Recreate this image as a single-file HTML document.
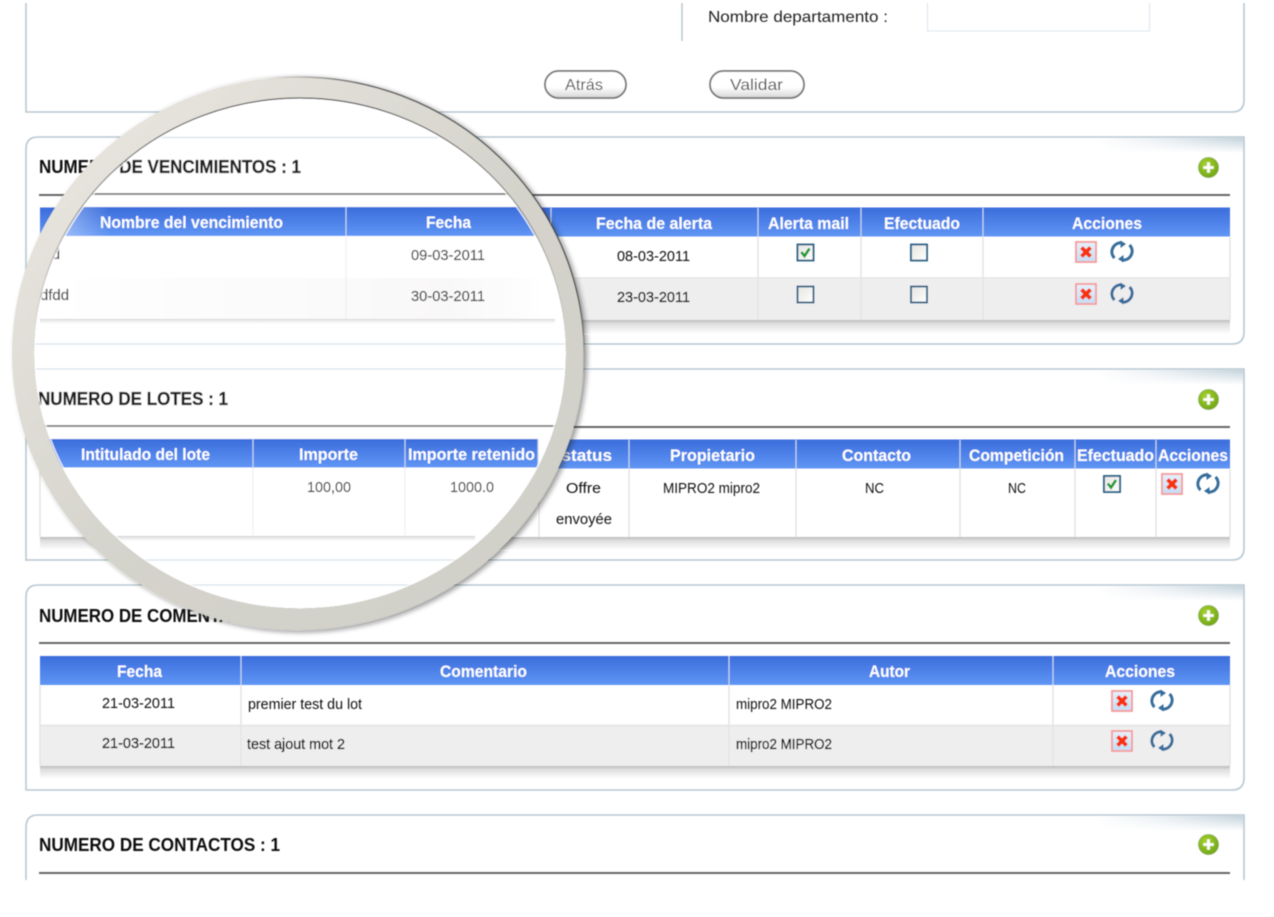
<!DOCTYPE html>
<html lang="es"><head><meta charset="utf-8"><title>Vencimientos</title>
<style>
html,body{margin:0;padding:0;background:#fff;width:1274px;height:917px;overflow:hidden}
svg{display:block;position:absolute;left:0;top:0}
text{font-family:"Liberation Sans",sans-serif}
.ti{font-size:18px;font-weight:bold;fill:#111}
.tl{font-size:18px;font-weight:bold;fill:#222;stroke:#222;stroke-width:.35}
.h{font-size:16.5px;font-weight:bold;fill:#fff}
.c{font-size:15px;fill:#111}
.d{font-size:15px;fill:#000;stroke:#000;stroke-width:.3}
.g{font-size:15px;fill:#444;stroke:#444;stroke-width:.15}
.n{font-size:16px;fill:#222}
.b{font-size:16px;fill:#555}
.p{fill:none;stroke:#b7c8d2;stroke-width:1.6}
.r{stroke:#666;stroke-width:2}
.s{stroke:#e3e3e3;stroke-width:1.4}
.hs{stroke:#c9d6ec;stroke-width:1.2}
</style></head><body>
<svg width="1274" height="917" viewBox="0 0 1274 917" xmlns="http://www.w3.org/2000/svg">
<defs>
<linearGradient id="hd" x1="0" y1="0" x2="0" y2="1"><stop offset="0" stop-color="#3b6ddb"/><stop offset="1" stop-color="#6096f5"/></linearGradient>
<linearGradient id="sh" x1="0" y1="0" x2="0" y2="1"><stop offset="0" stop-color="#bbb"/><stop offset=".25" stop-color="#ddd"/><stop offset="1" stop-color="#fff"/></linearGradient>
<linearGradient id="wedge" x1="0" y1="0" x2="1" y2="0"><stop offset="0" stop-color="#fff"/><stop offset=".45" stop-color="#e9eff3"/><stop offset="1" stop-color="#c3d2dc"/></linearGradient>
<linearGradient id="wfade" x1="0" y1="0" x2="0" y2="1"><stop offset="0" stop-color="#fff" stop-opacity="0"/><stop offset="1" stop-color="#fff"/></linearGradient>
<linearGradient id="btn" x1="0" y1="0" x2="0" y2="1"><stop offset="0" stop-color="#fff"/><stop offset=".6" stop-color="#fff"/><stop offset="1" stop-color="#d5d5d5"/></linearGradient>
<linearGradient id="cb" x1="0" y1="0" x2="1" y2="1"><stop offset="0" stop-color="#e4e4e0"/><stop offset="1" stop-color="#fff"/></linearGradient>
<linearGradient id="del" x1="0" y1="0" x2="0" y2="1"><stop offset="0" stop-color="#e8f1fb"/><stop offset="1" stop-color="#c5dcf4"/></linearGradient>
<linearGradient id="lrow" x1="0" y1="0" x2="1" y2="0"><stop offset="0" stop-color="#fff"/><stop offset=".8" stop-color="#f9f8f8"/><stop offset="1" stop-color="#fff"/></linearGradient>
<linearGradient id="glare" x1="0" y1="0" x2="1" y2="0"><stop offset="0" stop-color="#fff" stop-opacity=".4"/><stop offset="1" stop-color="#fff" stop-opacity="0"/></linearGradient>
<linearGradient id="ringg" x1="0" y1="0" x2="1" y2="1"><stop offset="0" stop-color="#ece9e3"/><stop offset=".55" stop-color="#d4d3cb"/><stop offset="1" stop-color="#d1d0c8"/></linearGradient>
<linearGradient id="inl" x1="0" y1="0" x2="0" y2="1"><stop offset="0" stop-color="#555"/><stop offset=".3" stop-color="#777" stop-opacity=".4"/><stop offset=".45" stop-color="#777" stop-opacity="0"/></linearGradient>
<linearGradient id="outl" x1="0" y1="1" x2="1" y2="0"><stop offset=".72" stop-color="#333" stop-opacity="0"/><stop offset=".8" stop-color="#333" stop-opacity=".85"/></linearGradient>
<radialGradient id="gr" cx=".4" cy=".35" r=".7"><stop offset="0" stop-color="#a8d42c"/><stop offset="1" stop-color="#6ea412"/></radialGradient>
<filter id="bl" x="-2%" y="-2%" width="104%" height="104%"><feGaussianBlur stdDeviation=".45"/></filter>
<filter id="bs" x="-10%" y="-10%" width="120%" height="120%"><feGaussianBlur stdDeviation="3"/></filter>
<clipPath id="lens"><ellipse cx="300" cy="353.5" rx="266" ry="255"/></clipPath>
<clipPath id="pg"><rect width="1274" height="880"/></clipPath>
<symbol id="plus" viewBox="0 0 22 22"><circle cx="11" cy="11" r="10.5" fill="url(#gr)" stroke="#8aa860" stroke-width=".7"/><path d="M11 5.500v11M5.500 11h11" stroke="#fff" stroke-width="3"/></symbol>
<symbol id="del2" viewBox="0 0 22 22"><rect x="1" y="1" width="20" height="20" fill="url(#del)" stroke="#f79a9a" stroke-width="1.800"/><path d="M6.500 6.500l9 9M15.500 6.500l-9 9" stroke="#f8300a" stroke-width="4"/></symbol>
<symbol id="sync" viewBox="0 0 24 22"><path d="M4.500 17.500A9.500 9 0 0 1 11 2.300" fill="none" stroke="#386d9b" stroke-width="3"/><path d="M10.500 0l5.500 3.500-5.500 4z" fill="#386d9b"/><path d="M19.500 4.500A9.500 9 0 0 1 13 19.700" fill="none" stroke="#386d9b" stroke-width="3"/><path d="M13.500 22l-5.500-3.500 5.500-4z" fill="#386d9b"/></symbol>
<symbol id="cbox" viewBox="0 0 18 18"><rect x="1" y="1" width="16" height="16" fill="url(#cb)" stroke="#2f6488" stroke-width="1.900"/></symbol>
<symbol id="cchk" viewBox="0 0 18 18"><rect x="1" y="1" width="16" height="16" fill="url(#cb)" stroke="#2f6488" stroke-width="1.900"/><path d="M4.800 8.500l3.200 4 5-7.500" fill="none" stroke="#129a2c" stroke-width="2.600"/></symbol>
<g id="wd"><rect x="1095" y="0" width="148" height="15" fill="url(#wedge)"/><rect x="1095" y="0" width="148" height="15" fill="url(#wfade)"/></g>
</defs>

<g filter="url(#bl)">
<g clip-path="url(#pg)">
<!-- panel 1 -->
<path class="p" d="M26 3V112H1232Q1244 112 1244 100V3"/>
<line x1="682" y1="3" x2="682" y2="41" stroke="#b9c6ce" stroke-width="1.500"/>
<text class="n" x="708" y="22" textLength="180" lengthAdjust="spacingAndGlyphs">Nombre departamento :</text>
<path d="M927.500 3V31H1149.500V3" fill="none" stroke="#e3e9f0" stroke-width="1.300"/>
<rect x="545" y="71" width="81" height="27" rx="13.500" fill="url(#btn)" stroke="#777" stroke-width="1.800"/>
<text class="b" x="565" y="90" textLength="38" lengthAdjust="spacingAndGlyphs">Atrás</text>
<rect x="710" y="71" width="94" height="27" rx="13.500" fill="url(#btn)" stroke="#777" stroke-width="1.800"/>
<text class="b" x="730" y="90" textLength="53" lengthAdjust="spacingAndGlyphs">Validar</text>

<!-- panel 2 -->
<use href="#wd" y="138"/>
<path class="p" d="M26 344V149Q26 137 38 137H1244V332Q1244 344 1232 344Z"/>
<text class="ti" x="39" y="173" textLength="262" lengthAdjust="spacingAndGlyphs">NUMERO DE VENCIMIENTOS : 1</text>
<use href="#plus" x="1198" y="157" width="21" height="21"/>
<line class="r" x1="39" y1="195" x2="1230" y2="195"/>
<rect x="40" y="207.500" width="1190" height="29" fill="url(#hd)"/>
<path class="hs" d="M346 208v29M551 208v29M758 208v29M861 208v29M983 208v29"/>
<rect x="40" y="279" width="1190" height="41" fill="#efeeef"/>
<rect x="40" y="320" width="1190" height="14" fill="url(#sh)"/>
<path class="s" d="M40 237v83M346 237v83M551 237v83M758 237v83M861 237v83M983 237v83M1230 237v83"/>
<line class="s" x1="40" y1="278" x2="1230" y2="278"/>
<text class="h" x="596" y="229" textLength="116" lengthAdjust="spacingAndGlyphs">Fecha de alerta</text>
<text class="h" x="768" y="229" textLength="81" lengthAdjust="spacingAndGlyphs">Alerta mail</text>
<text class="h" x="884" y="229" textLength="76" lengthAdjust="spacingAndGlyphs">Efectuado</text>
<text class="h" x="1072" y="229" textLength="70" lengthAdjust="spacingAndGlyphs">Acciones</text>
<text class="c" x="617" y="261" textLength="73" lengthAdjust="spacingAndGlyphs">08-03-2011</text>
<text class="d" x="617" y="302" textLength="73" lengthAdjust="spacingAndGlyphs">23-03-2011</text>
<use href="#cchk" x="796.500" y="243.500" width="18" height="18"/>
<use href="#cbox" x="910" y="243.500" width="18" height="18"/>
<use href="#cbox" x="796.500" y="285.500" width="18" height="18"/>
<use href="#cbox" x="910" y="285.500" width="18" height="18"/>
<use href="#del2" x="1075" y="241" width="22" height="22"/><use href="#sync" x="1110" y="240.500" width="24" height="22"/>
<use href="#del2" x="1075" y="283" width="22" height="22"/><use href="#sync" x="1110" y="282.500" width="24" height="22"/>

<!-- panel 3 -->
<use href="#wd" y="370"/>
<path class="p" d="M26 561V369H1244V548Q1244 560 1232 560H26"/>
<text class="ti" x="39" y="405" textLength="189" lengthAdjust="spacingAndGlyphs">NUMERO DE LOTES : 1</text>
<use href="#plus" x="1198" y="389" width="21" height="21"/>
<line class="r" x1="39" y1="427" x2="1230" y2="427"/>
<rect x="40" y="439.500" width="1190" height="29" fill="url(#hd)"/>
<path class="hs" d="M539 440v29M629 440v29M796 440v29M960 440v29M1075 440v29M1156 440v29"/>
<rect x="40" y="537" width="1190" height="13" fill="url(#sh)"/>
<path class="s" d="M40 469v68M539 469v68M629 469v68M796 469v68M960 469v68M1075 469v68M1156 469v68M1230 469v68"/>
<text class="h" x="550" y="461" textLength="62" lengthAdjust="spacingAndGlyphs">Estatus</text>
<text class="h" x="670" y="461" textLength="85" lengthAdjust="spacingAndGlyphs">Propietario</text>
<text class="h" x="842" y="461" textLength="69" lengthAdjust="spacingAndGlyphs">Contacto</text>
<text class="h" x="969" y="461" textLength="95" lengthAdjust="spacingAndGlyphs">Competición</text>
<text class="h" x="1077" y="461" textLength="77" lengthAdjust="spacingAndGlyphs">Efectuado</text>
<text class="h" x="1158" y="461" textLength="70" lengthAdjust="spacingAndGlyphs">Acciones</text>
<text class="c" x="566" y="493" textLength="35" lengthAdjust="spacingAndGlyphs">Offre</text>
<text class="c" x="556" y="524" textLength="56" lengthAdjust="spacingAndGlyphs">envoyée</text>
<text class="c" x="663" y="493" textLength="97" lengthAdjust="spacingAndGlyphs">MIPRO2 mipro2</text>
<text class="c" x="865" y="493" textLength="19" lengthAdjust="spacingAndGlyphs">NC</text>
<text class="c" x="1008" y="493" textLength="18" lengthAdjust="spacingAndGlyphs">NC</text>
<use href="#cchk" x="1103" y="475" width="18" height="18"/>
<use href="#del2" x="1161" y="473" width="22" height="22"/><use href="#sync" x="1196" y="472.500" width="24" height="22"/>

<!-- panel 4 -->
<use href="#wd" y="586"/>
<path class="p" d="M26 790V597Q26 585 38 585H1244V778Q1244 790 1232 790Z"/>
<text class="ti" x="39" y="622" textLength="258" lengthAdjust="spacingAndGlyphs">NUMERO DE COMENTARIOS : 1</text>
<use href="#plus" x="1198" y="605" width="21" height="21"/>
<line class="r" x1="39" y1="643" x2="1230" y2="643"/>
<rect x="40" y="656" width="1190" height="29" fill="url(#hd)"/>
<path class="hs" d="M241 656v29M729 656v29M1053 656v29"/>
<rect x="40" y="726" width="1190" height="40" fill="#efeeef"/>
<rect x="40" y="766" width="1190" height="13" fill="url(#sh)"/>
<path class="s" d="M40 685v81M241 685v81M729 685v81M1053 685v81M1230 685v81"/>
<line class="s" x1="40" y1="725.500" x2="1230" y2="725.500"/>
<text class="h" x="117" y="677" textLength="45" lengthAdjust="spacingAndGlyphs">Fecha</text>
<text class="h" x="440" y="677" textLength="87" lengthAdjust="spacingAndGlyphs">Comentario</text>
<text class="h" x="869" y="677" textLength="41" lengthAdjust="spacingAndGlyphs">Autor</text>
<text class="h" x="1105" y="677" textLength="70" lengthAdjust="spacingAndGlyphs">Acciones</text>
<text class="c" x="102" y="708" textLength="73" lengthAdjust="spacingAndGlyphs">21-03-2011</text>
<text class="c" x="248" y="709" textLength="114" lengthAdjust="spacingAndGlyphs">premier test du lot</text>
<text class="c" x="736" y="709" textLength="96" lengthAdjust="spacingAndGlyphs">mipro2 MIPRO2</text>
<text class="d" x="102" y="748" textLength="73" lengthAdjust="spacingAndGlyphs">21-03-2011</text>
<text class="d" x="247" y="749" textLength="98" lengthAdjust="spacingAndGlyphs">test ajout mot 2</text>
<text class="d" x="736" y="749" textLength="96" lengthAdjust="spacingAndGlyphs">mipro2 MIPRO2</text>
<use href="#del2" x="1111" y="690" width="22" height="22"/><use href="#sync" x="1150" y="689.500" width="24" height="22"/>
<use href="#del2" x="1111" y="730" width="22" height="22"/><use href="#sync" x="1150" y="729.500" width="24" height="22"/>

<!-- panel 5 -->
<use href="#wd" y="816"/>
<path class="p" d="M26 880V827Q26 815 38 815H1244V880"/>
<text class="ti" x="39" y="851" textLength="241" lengthAdjust="spacingAndGlyphs">NUMERO DE CONTACTOS : 1</text>
<use href="#plus" x="1198" y="834" width="21" height="21"/>
<line class="r" x1="39" y1="873" x2="1230" y2="873"/>
</g>

<!-- lens shadow -->
<ellipse cx="301" cy="355" rx="285.500" ry="276.500" fill="#222" opacity=".55" filter="url(#bs)"/>

<!-- lens contents -->
<g clip-path="url(#lens)">
<rect x="0" y="70" width="600" height="570" fill="#fff"/>
<path d="M26 137.500H600M30 344H600M30 369H600M30 560H600M30 585H600" stroke="#d6e2e9" stroke-width="1.200"/>
<text class="tl" x="39" y="173" textLength="262" lengthAdjust="spacingAndGlyphs">NUMERO DE VENCIMIENTOS : 1</text>
<line x1="39" y1="194" x2="600" y2="194" stroke="#777" stroke-width="1.800"/>
<rect x="40" y="207" width="495" height="29" fill="url(#hd)"/>
<rect x="60" y="207" width="50" height="29" fill="url(#glare)"/>
<line class="hs" x1="346" y1="207" x2="346" y2="236"/>
<text class="h" x="100" y="228" textLength="183" lengthAdjust="spacingAndGlyphs">Nombre del vencimiento</text>
<text class="h" x="426" y="228" textLength="45" lengthAdjust="spacingAndGlyphs">Fecha</text>
<rect x="40" y="278" width="510" height="41" fill="url(#lrow)"/>
<rect x="40" y="319" width="515" height="5" fill="url(#sh)" opacity=".7"/>
<line x1="346" y1="237" x2="346" y2="319" stroke="#efefef" stroke-width="1.200"/>
<text class="g" x="40" y="259" textLength="20" lengthAdjust="spacingAndGlyphs">dfd</text>
<text class="g" x="40" y="300" textLength="29" lengthAdjust="spacingAndGlyphs">dfdd</text>
<text class="g" x="411" y="260" textLength="74" lengthAdjust="spacingAndGlyphs">09-03-2011</text>
<text class="g" x="411" y="301" textLength="74" lengthAdjust="spacingAndGlyphs">30-03-2011</text>

<text class="tl" x="38" y="405" textLength="190" lengthAdjust="spacingAndGlyphs">NUMERO DE LOTES : 1</text>
<line x1="39" y1="426" x2="600" y2="426" stroke="#777" stroke-width="1.800"/>
<rect x="40" y="439" width="498" height="28.500" fill="url(#hd)"/>
<path class="hs" d="M253 439v29M405 439v29M538 439v29"/>
<text class="h" x="81" y="460" textLength="129" lengthAdjust="spacingAndGlyphs">Intitulado del lote</text>
<text class="h" x="299" y="460" textLength="59" lengthAdjust="spacingAndGlyphs">Importe</text>
<text class="h" x="408" y="460" textLength="127" lengthAdjust="spacingAndGlyphs">Importe retenido</text>
<path d="M253 468v67M405 468v67" stroke="#f0f0f0" stroke-width="1.200"/>
<path d="M539 468v69" stroke="#e3e3e3" stroke-width="1.200"/>
<text class="g" x="44" y="492">t</text>
<text class="g" x="307" y="492" textLength="44" lengthAdjust="spacingAndGlyphs">100,00</text>
<text class="g" x="450" y="492" textLength="44" lengthAdjust="spacingAndGlyphs">1000.0</text>
<text class="c" x="566" y="493" textLength="35" lengthAdjust="spacingAndGlyphs">Offre</text>
<text class="c" x="556" y="524" textLength="56" lengthAdjust="spacingAndGlyphs">envoyée</text>
<rect x="40" y="536" width="435" height="5" fill="url(#sh)" opacity=".8"/>
</g>

<!-- ring -->
<path fill="url(#ringg)" fill-rule="evenodd" d="M12 353.500a286 276.500 0 1 0 572 0a286 276.500 0 1 0-572 0ZM34 353.500a266 255 0 1 0 532 0a266 255 0 1 0-532 0Z"/>
<ellipse cx="300" cy="353.500" rx="266.500" ry="255.500" fill="none" stroke="url(#inl)" stroke-width="1.200"/>
<ellipse cx="300" cy="353.500" rx="265" ry="254" fill="none" stroke="#fff" stroke-width="1.200" opacity=".9"/>
<ellipse cx="298" cy="353.500" rx="286" ry="276.500" fill="none" stroke="url(#outl)" stroke-width="1.300"/>
</g>
</svg>
</body></html>
